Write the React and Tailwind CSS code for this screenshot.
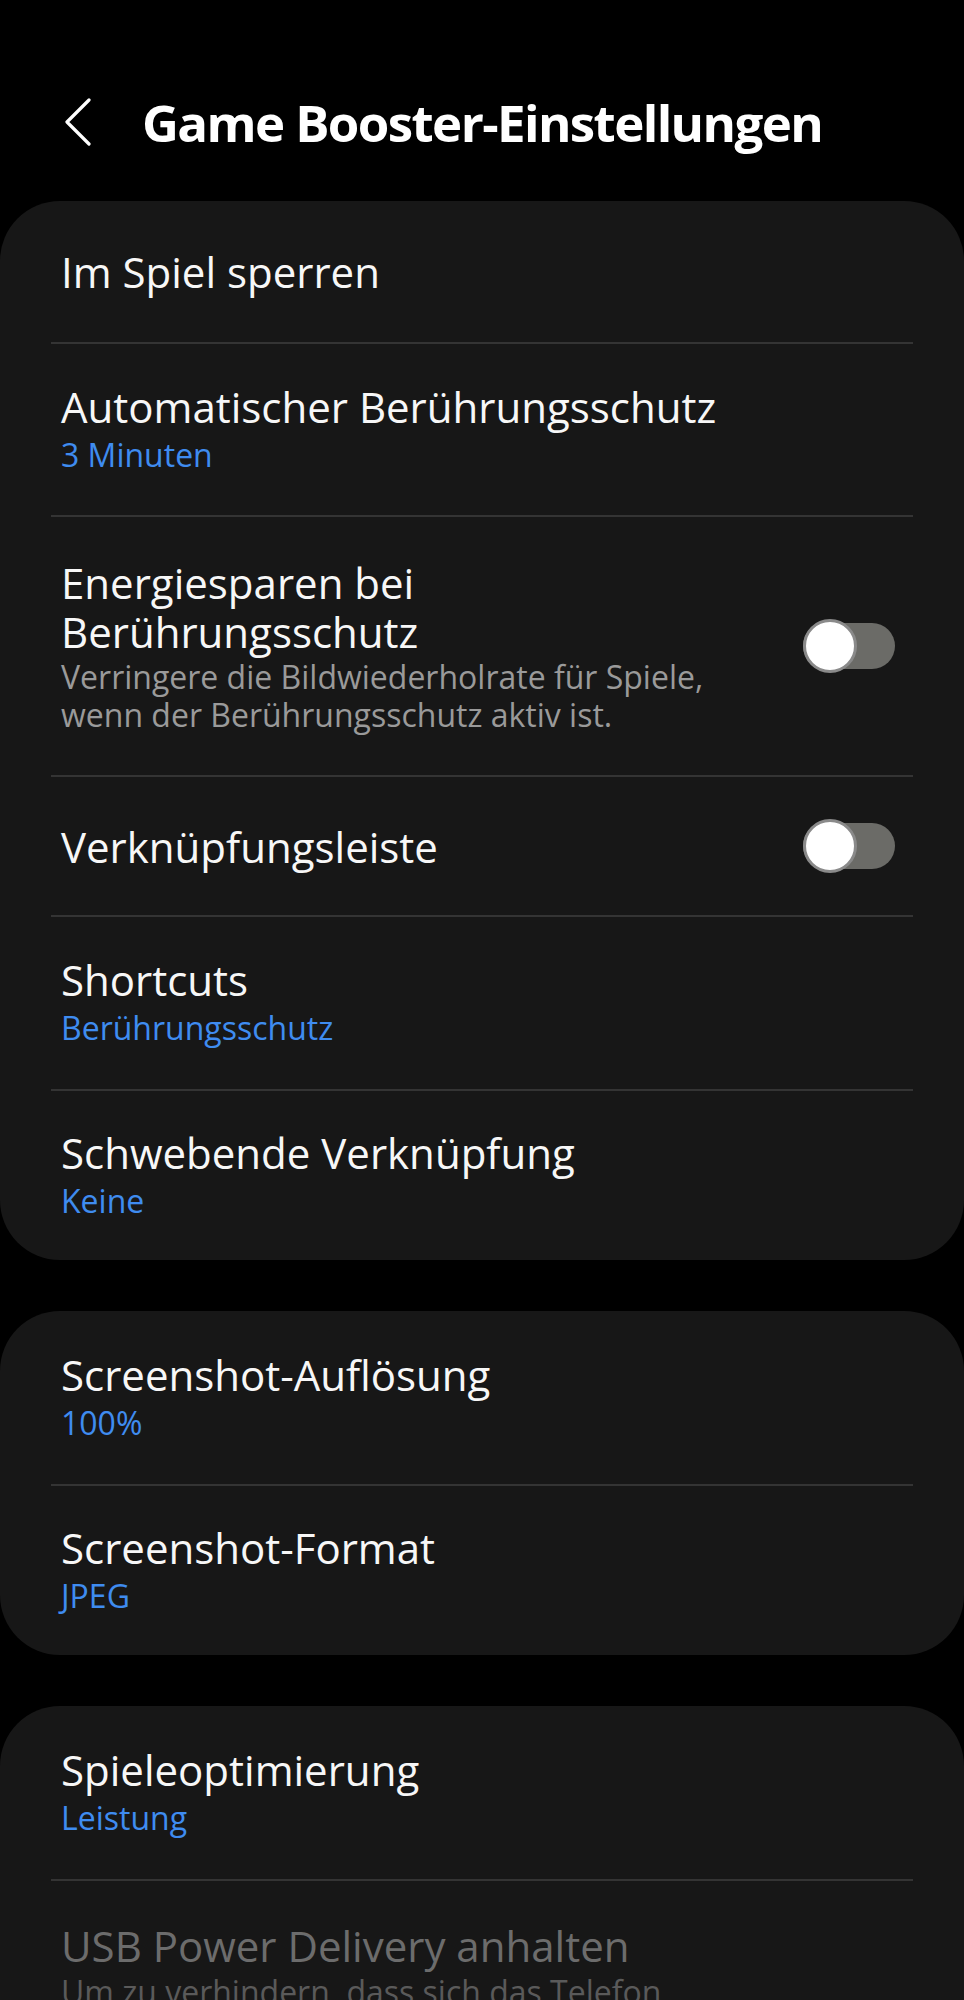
import React from 'react';

const Toggle = () => (
  <div className="relative w-[92px] h-[46px] shrink-0">
    <div className="absolute inset-0 rounded-full bg-[#6b6b67]" />
    <div className="absolute left-0 top-[-4px] w-[54px] h-[54px] rounded-full bg-white border-[3px] border-[#8a8a8a]" />
  </div>
);

const Divider = () => <div className="h-[2px] mx-[51px] bg-[#343434]" />;

const Row = ({ title, sub, height }) => (
  <div className={`flex flex-col justify-center px-[61px] ${height}`}>
    <div className="text-[42px] leading-[50px] text-[#f7f7f7]">{title}</div>
    {sub && <div className="text-[32px] leading-[46px] font-medium text-[#3f8cf0]">{sub}</div>}
  </div>
);

const Card = ({ children }) => (
  <div className="bg-[#171717] rounded-[60px] overflow-hidden">{children}</div>
);

export default function App() {
  return (
    <div className="min-h-screen bg-black h-[2000px] overflow-hidden" style={{ fontFamily: '"Open Sans", "Liberation Sans", sans-serif' }}>
      <div className="h-[201px] flex items-start pt-[96px]">
        <svg className="ml-[64px] mt-[2px]" width="28" height="48" viewBox="0 0 28 48" fill="none">
          <path d="M25 2 L3 24 L25 46" stroke="white" strokeWidth="3.2" strokeLinecap="round" strokeLinejoin="round" />
        </svg>
        <h1 className="ml-[50px] text-[51px] leading-[52px] font-bold tracking-[-1.6px] text-white">Game Booster-Einstellungen</h1>
      </div>

      <div className="flex flex-col gap-[51px]">
        <Card>
          <div className="h-[141px] flex items-center px-[61px] text-[42px] text-[#f7f7f7]">Im Spiel sperren</div>
          <Divider />
          <Row title="Automatischer Berührungsschutz" sub="3 Minuten" height="h-[171px]" />
          <Divider />
          <div className="h-[258px] flex items-center justify-between pl-[61px] pr-[69px]">
            <div>
              <div className="text-[42px] leading-[49px] text-[#f7f7f7]">Energiesparen bei<br />Berührungsschutz</div>
              <div className="text-[32px] leading-[38px] text-[#9a9a9a] mt-[2px]">Verringere die Bildwiederholrate für Spiele,<br />wenn der Berührungsschutz aktiv ist.</div>
            </div>
            <Toggle />
          </div>
          <Divider />
          <div className="h-[138px] flex items-center justify-between pl-[61px] pr-[69px]">
            <div className="text-[42px] text-[#f7f7f7]">Verknüpfungsleiste</div>
            <Toggle />
          </div>
          <Divider />
          <Row title="Shortcuts" sub="Berührungsschutz" height="h-[172px]" />
          <Divider />
          <Row title="Schwebende Verknüpfung" sub="Keine" height="h-[169px]" />
        </Card>

        <Card>
          <Row title="Screenshot-Auflösung" sub="100%" height="h-[173px]" />
          <Divider />
          <Row title="Screenshot-Format" sub="JPEG" height="h-[169px]" />
        </Card>

        <Card>
          <Row title="Spieleoptimierung" sub="Leistung" height="h-[173px]" />
          <Divider />
          <div className="px-[61px] pt-[40px] pb-[40px]">
            <div className="text-[42px] leading-[50px] text-[#6c6c6c]">USB Power Delivery anhalten</div>
            <div className="text-[32px] leading-[38px] text-[#5a5a5a] mt-[2px]">Um zu verhindern, dass sich das Telefon<br />während des Spielens auflädt.</div>
          </div>
        </Card>
      </div>
    </div>
  );
}
